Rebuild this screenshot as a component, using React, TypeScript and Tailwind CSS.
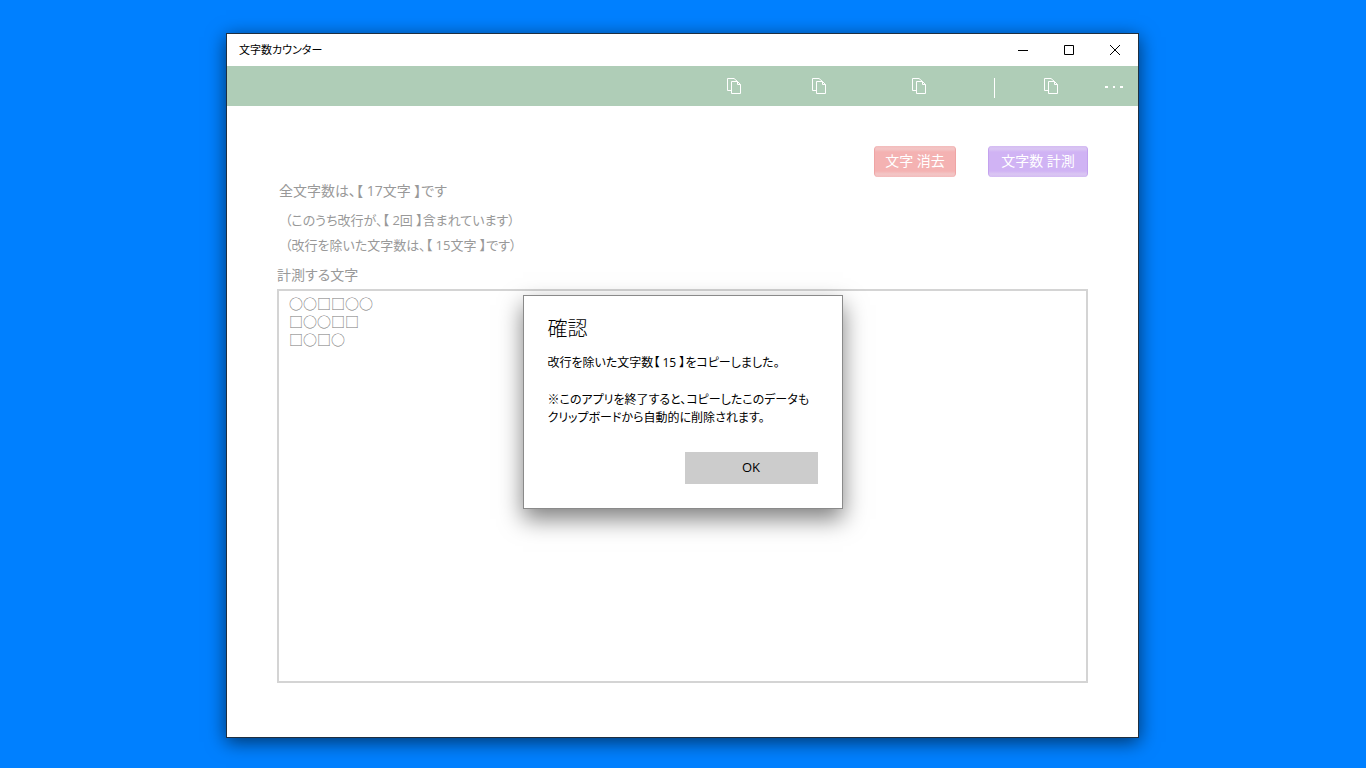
import type { ReactNode } from 'react'

const copyButtons = [
  { label: '全文字数をコピー', width: 'w-[76px]' },
  { label: '改行の回数をコピー', width: 'w-[94px]' },
  { label: '改行を除いた文字数をコピー', width: 'w-[106px]' },
]

function CopyIcon() {
  return (
    <svg width="14" height="16" viewBox="0 0 14 16" fill="none" stroke="currentColor" aria-hidden="true">
      <path d="M4 12.5H.5V.5H7L10.5 3.5" />
      <path d="M4.5 3.5H10.5L13.5 6.5V15.5H4.5Z" />
      <path d="M10.5 3.5V6.5H13.5" />
    </svg>
  )
}

function CaptionButton({ label, children }: { label: string; children: ReactNode }) {
  return (
    <button type="button" aria-label={label} className="flex h-8 w-[46px] items-center justify-center">
      <svg width="10" height="10" viewBox="0 0 10 10" fill="none" stroke="currentColor" aria-hidden="true">
        {children}
      </svg>
    </button>
  )
}

function TitleBar() {
  return (
    <header className="flex h-8 shrink-0 items-center bg-white pl-3 text-black">
      <h1 className="flex-1 text-[11px]">文字数カウンター</h1>
      <CaptionButton label="最小化">
        <path d="M0 5.5H10" />
      </CaptionButton>
      <CaptionButton label="最大化">
        <path d="M.5 .5H9.5V9.5H.5Z" />
      </CaptionButton>
      <CaptionButton label="閉じる">
        <path d="M0 0L10 10M10 0L0 10" />
      </CaptionButton>
    </header>
  )
}

function CommandBar() {
  return (
    <nav className="flex h-10 shrink-0 items-center justify-end bg-[#afcdb7] text-white">
      {copyButtons.map((button) => (
        <button
          key={button.label}
          type="button"
          aria-label={button.label}
          className={`flex h-10 items-center justify-center ${button.width}`}
        >
          <CopyIcon />
        </button>
      ))}
      <div className="mt-1 mr-[17px] ml-[22px] h-5 w-px bg-white" />
      <button type="button" aria-label="すべてコピー" className="flex h-10 w-[78px] items-center justify-center">
        <CopyIcon />
      </button>
      <button type="button" aria-label="その他" className="flex h-10 w-12 items-center justify-center pt-0.5">
        <svg width="18" height="2" viewBox="0 0 18 2" fill="currentColor" aria-hidden="true">
          <path d="M0 0H3V2H0ZM8 0H10V2H8ZM15 0H18V2H15Z" />
        </svg>
      </button>
    </nav>
  )
}

function ConfirmDialog() {
  return (
    <div className="absolute inset-0 flex items-center justify-center">
      <div
        role="dialog"
        aria-labelledby="dialog-title"
        className="w-80 border border-[#8a8a8a] bg-white px-6 pt-[19px] pb-6 text-black shadow-[0_10px_22px_rgba(0,0,0,0.5)]"
      >
        <h2 id="dialog-title" className="text-xl leading-7 font-light">
          確認
        </h2>
        <div className="mt-[11px] text-xs leading-[18px] whitespace-nowrap">
          <p>改行を除いた文字数【 15 】をコピーしました。</p>
          <p className="mt-[19px]">
            ※このアプリを終了すると、コピーしたこのデータも
            <br />
            クリップボードから自動的に削除されます。
          </p>
        </div>
        <div className="mt-[25px] flex justify-end">
          <button type="button" className="h-8 w-[133px] bg-[#cccccc] text-[13px]">
            OK
          </button>
        </div>
      </div>
    </div>
  )
}

export default function App() {
  return (
    <div
      lang="ja"
      className="flex min-h-screen flex-col bg-[#0080ff] pt-[33px] pr-[227px] pb-[30px] pl-[226px] font-['Open_Sans','Noto_Sans_CJK_JP',sans-serif] [font-feature-settings:'palt','kern']"
    >
      <div className="flex flex-1 flex-col border border-[#1f2f40] bg-white shadow-[0_4px_18px_rgba(0,0,0,0.6)]">
        <TitleBar />
        <div className="relative flex flex-1 flex-col">
          <CommandBar />
          <main className="flex flex-1 flex-col px-[50px] pt-10 pb-[54px] text-sm text-[#999999]">
            <div className="flex justify-end gap-8">
              <button
                type="button"
                className="h-[31px] w-[82px] rounded-[4px] border-x border-[#efa4a4] bg-[linear-gradient(#f3bcbc,#f3c6c6_3px,#f4b2b2_6px,#f4b2b2_25px,#f3c6c6_28px,#f3bcbc)] pb-px text-white"
              >
                文字 消去
              </button>
              <button
                type="button"
                className="h-[31px] w-[100px] rounded-[4px] border-x border-[#c4a2ee] bg-[linear-gradient(#d4bcf2,#dac6f3_3px,#d0b3f4_6px,#d0b3f4_25px,#dac6f3_28px,#d4bcf2)] pb-px text-white"
              >
                文字数 計測
              </button>
            </div>
            <p className="pl-0.5 leading-7">全文字数は、【 17文字 】です</p>
            <div className="mt-[3px] pl-2 text-[13px] leading-[25px]">
              <p>（このうち改行が、【 2回 】含まれています）</p>
              <p>（改行を除いた文字数は、【 15文字 】です）</p>
            </div>
            <label htmlFor="source-text" className="mt-[3px] leading-7">
              計測する文字
            </label>
            <textarea
              id="source-text"
              defaultValue={'○○□□○○\n□○○□□\n□○□○'}
              className="flex-1 resize-none border-2 border-[#d4d4d4] bg-white px-2.5 py-1 leading-[18px] text-[#777777] outline-none"
            />
          </main>
          <ConfirmDialog />
        </div>
      </div>
    </div>
  )
}
